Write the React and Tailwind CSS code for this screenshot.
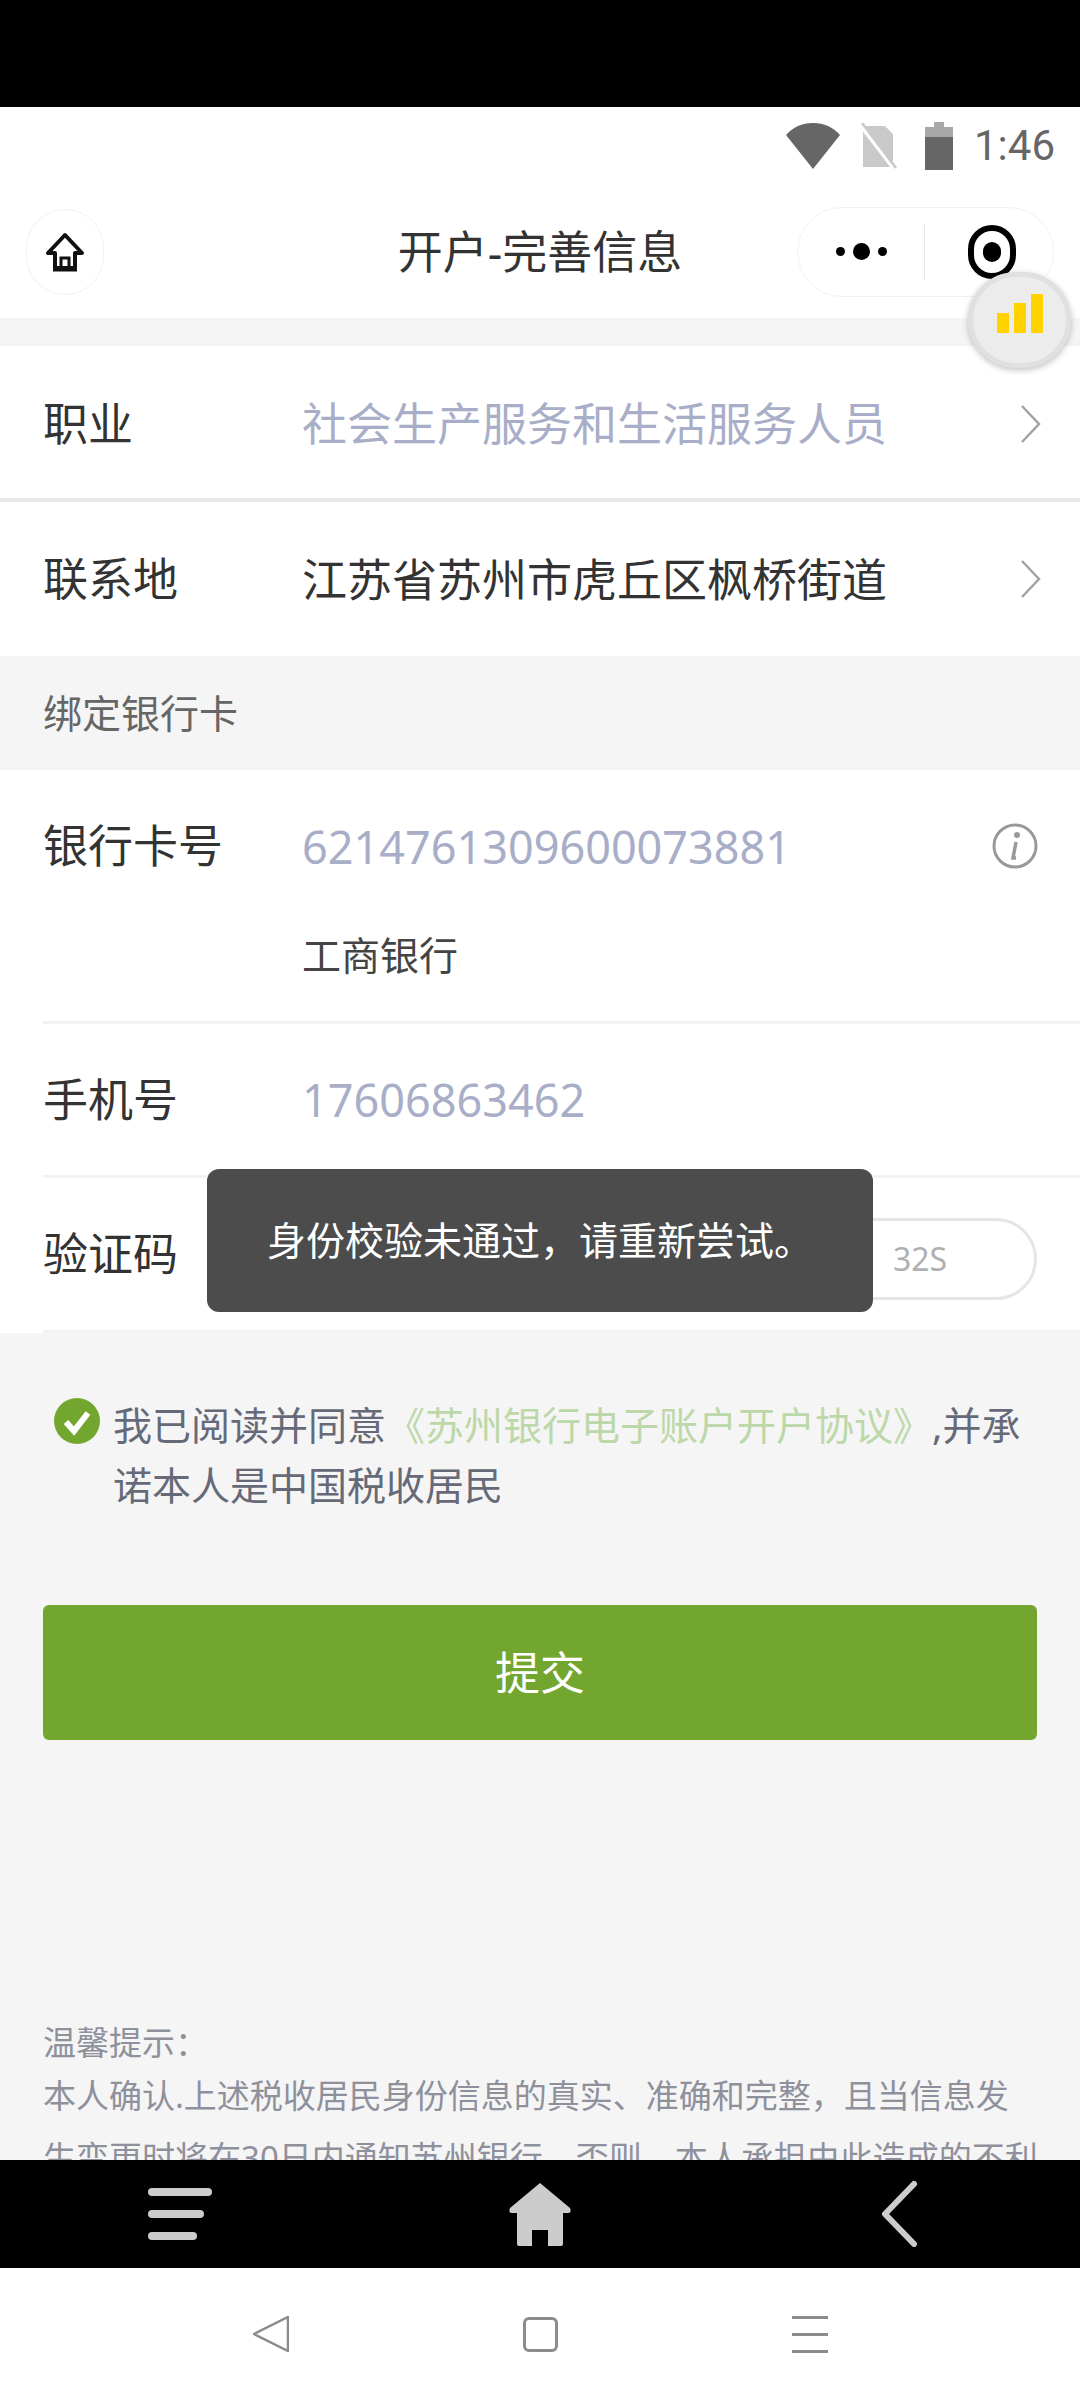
import React from 'react';

const FONT = "font-['Noto_Sans','Noto_Sans_CJK_SC',sans-serif]";

function Chevron() {
  return (
    <svg width="24" height="42" viewBox="0 0 24 42" fill="none" stroke="#a3a3a3" strokeWidth="2.5" className="shrink-0 mr-[-6px]">
      <path d="M3 3l17 18L3 39" />
    </svg>
  );
}

function Row({ label, value, valueClass = 'text-[#333]', right, className = '' }) {
  return (
    <div className={`flex items-center px-[43px] ${className}`}>
      <div className="w-[259px] shrink-0 text-[45px] text-[#333]">{label}</div>
      <div className={`flex-1 text-[45px] leading-none whitespace-nowrap ${valueClass}`}>{value}</div>
      {right}
    </div>
  );
}

function StatusBar() {
  return (
    <div className="h-[78px] flex items-center justify-end pr-[25px]">
      <svg width="54" height="46" viewBox="0 0 54 46" className="mr-[19px]">
        <path d="M0 12C7 4 16 0 27 0s20 4 27 12L27 46z" fill="#666" />
      </svg>
      <svg width="38" height="46" viewBox="0 0 38 46" className="mr-[28px]">
        <path d="M4 3h22l8 8v33H4z" fill="#c9c9c9" />
        <path d="M2 2l33 43" stroke="#fff" strokeWidth="5" />
        <path d="M3 0l34 45" stroke="#c9c9c9" strokeWidth="2.5" />
      </svg>
      <svg width="28" height="48" viewBox="0 0 28 48" className="mr-[21px]">
        <path d="M9 0h10v5H9z" fill="#a8a8a8" />
        <path d="M0 5h28v11H0z" fill="#a8a8a8" />
        <path d="M0 15h28v33H0z" fill="#666" />
      </svg>
      <span className="text-[42px] leading-none text-[#666] font-['Roboto',sans-serif]">1:46</span>
    </div>
  );
}

function NavBar() {
  return (
    <div className="h-[133px] flex items-center justify-between pl-[26px] pr-[26px] relative">
      <div className="w-[78px] h-[86px] rounded-full border border-[#f1f1f1] flex items-center justify-center">
        <svg width="40" height="40" viewBox="0 0 40 40" fill="none" stroke="#111" strokeWidth="4">
          <path d="M20 3L3 21h7v15h20V21h7z" strokeLinejoin="round" />
          <path d="M16 36V26h8v10" strokeWidth="3" />
          <path d="M8 38h24" strokeWidth="3" />
        </svg>
      </div>
      <div className="absolute left-0 right-0 text-center text-[45px] text-[#333]">开户-完善信息</div>
      <div className="w-[257px] h-[90px] rounded-full border border-[#f1f1f1] flex items-center">
        <div className="w-[127px] h-[56px] border-r border-[#e6e6e6] flex items-center justify-center gap-[8px]">
          <span className="w-[9px] h-[9px] rounded-full bg-black" />
          <span className="w-[17px] h-[17px] rounded-full bg-black" />
          <span className="w-[9px] h-[9px] rounded-full bg-black" />
        </div>
        <div className="flex-1 flex items-center justify-center pl-[6px]">
          <span className="w-[48px] h-[54px] rounded-full border-[6px] border-black flex items-center justify-center">
            <span className="w-[18px] h-[20px] rounded-full bg-black" />
          </span>
        </div>
      </div>
    </div>
  );
}

export default function App() {
  return (
    <div className={`relative w-full h-[2400px] flex flex-col overflow-hidden bg-white ${FONT}`}>
      <div className="h-[107px] bg-black shrink-0" />
      <StatusBar />
      <NavBar />

      <main className="h-[1842px] shrink-0 bg-[#f5f5f5] overflow-hidden pt-[28px]">
        <div className="bg-white">
          <Row label="职业" value="社会生产服务和生活服务人员" valueClass="text-[#a9aec8]" right={<Chevron />} className="h-[149px] pt-[3px] border-b-[4px] border-[#e8e8e8] box-content" />
          <Row label="联系地" value="江苏省苏州市虎丘区枫桥街道" right={<Chevron />} className="h-[154px]" />
        </div>

        <div className="h-[114px] flex items-center px-[43px] text-[39px] text-[#666]">绑定银行卡</div>

        <div className="bg-white pl-[43px]">
          <div className="h-[254px] border-b-[3px] border-[#f2f2f2] flex flex-col">
            <div className="h-[152px] flex items-center pr-[42px]">
              <div className="w-[259px] shrink-0 text-[45px] text-[#333]">银行卡号</div>
              <div className="flex-1 text-[45px] leading-none text-[#a9aec8]">6214761309600073881</div>
              <svg width="46" height="48" viewBox="0 0 46 48" fill="none">
                <circle cx="23" cy="24" r="21" stroke="#999" strokeWidth="3" />
                <circle cx="25" cy="13" r="3" fill="#999" />
                <path d="M24 20l-3 16h3" stroke="#999" strokeWidth="3.5" />
              </svg>
            </div>
            <div className="pl-[259px] text-[39px] leading-[54px] text-[#444] mt-[6px]">工商银行</div>
          </div>
          <div className="h-[154px] border-b-[3px] border-[#f2f2f2] flex items-center">
            <div className="w-[259px] shrink-0 text-[45px] text-[#333]">手机号</div>
            <div className="text-[45px] leading-none text-[#a9aec8]">17606863462</div>
          </div>
          <div className="h-[155px] border-b-[3px] border-[#f2f2f2] flex items-center justify-between pr-[43px]">
            <div className="text-[45px] text-[#333]">验证码</div>
            <div className="w-[240px] h-[82px] mt-[10px] rounded-full border-[3px] border-[#e6e6e6] flex items-center pl-[93px] text-[32px] text-[#b0b0b0]">32S</div>
          </div>
        </div>

        <div className="flex items-start pl-[54px] pr-[43px] mt-[62px]">
          <svg width="46" height="48" viewBox="0 0 46 48" className="shrink-0 mr-[13px] mt-[2px]">
            <circle cx="23" cy="24" r="23" fill="#73a62f" />
            <path d="M12 25l8 9 14-18" fill="none" stroke="#fff" strokeWidth="6" />
          </svg>
          <p className="text-[39px] leading-[60px] text-[#666a78]">
            我已阅读并同意<span className="text-[#bcd8a8]">《苏州银行电子账户开户协议》</span>,并承诺本人是中国税收居民
          </p>
        </div>

        <div className="mx-[43px] mt-[90px] h-[135px] rounded-[6px] bg-[#73a62f] flex items-center justify-center text-[45px] text-white">提交</div>

        <div className="px-[43px] mt-[281px] text-[33px] text-[#8e909c] whitespace-nowrap">
          <div className="leading-[44px]">温馨提示：</div>
          <div className="leading-[62px]">本人确认.上述税收居民身份信息的真实、准确和完整，且当信息发</div>
          <div className="leading-[62px]">生变更时将在30日内通知苏州银行，否则，本人承担由此造成的不利</div>
        </div>
      </main>

      <div className="h-[108px] shrink-0 bg-black grid grid-cols-3 place-items-center">
        <div className="flex flex-col gap-[14px] w-[64px]">
          <span className="block h-[8px] w-[64px] rounded-full bg-[#ccc]" />
          <span className="block h-[8px] w-[56px] rounded-full bg-[#ccc]" />
          <span className="block h-[8px] w-[49px] rounded-full bg-[#ccc]" />
        </div>
        <svg width="64" height="64" viewBox="0 0 64 64" fill="#ccc">
          <path d="M32 1L62 26Q64 31 60 31H55V62Q55 64 52 64H40V48H24V64H12Q9 64 9 62V31H4Q0 31 2 26Z" />
        </svg>
        <svg width="38" height="66" viewBox="0 0 38 66" fill="none" stroke="#ccc" strokeWidth="6" strokeLinecap="round" strokeLinejoin="round">
          <path d="M33 3L4 33l29 30" />
        </svg>
      </div>

      <div className="flex-1 flex items-center justify-center gap-[234px] bg-white">
        <svg width="36" height="36" viewBox="0 0 36 36" fill="none" stroke="#8c8c8c" strokeWidth="2.5" strokeLinejoin="round">
          <path d="M35 1v34L1 18z" />
        </svg>
        <span className="block w-[35px] h-[35px] rounded-[6px] border-[3px] border-[#8c8c8c]" />
        <div className="flex flex-col gap-[14px]">
          <span className="block w-[36px] h-[3px] bg-[#8c8c8c]" />
          <span className="block w-[36px] h-[3px] bg-[#8c8c8c]" />
          <span className="block w-[36px] h-[3px] bg-[#8c8c8c]" />
        </div>
      </div>

      <div className="absolute left-[207px] top-[1169px] w-[666px] h-[143px] rounded-[12px] bg-[#4c4c4c] flex items-center justify-center text-[39px] text-white">
        身份校验未通过，请重新尝试。
      </div>

      <div className="absolute left-[968px] top-[272px] w-[103px] h-[96px] rounded-full bg-[#ececec] border-[5px] border-[#e0e0e0] shadow-[0_2px_6px_rgba(0,0,0,0.25)] flex items-end justify-center gap-[5px] pb-[30px]">
        <span className="block w-[12px] h-[20px] bg-[#ffd200]" />
        <span className="block w-[12px] h-[30px] bg-[#ffd200]" />
        <span className="block w-[12px] h-[39px] bg-[#ffd200]" />
      </div>
    </div>
  );
}
